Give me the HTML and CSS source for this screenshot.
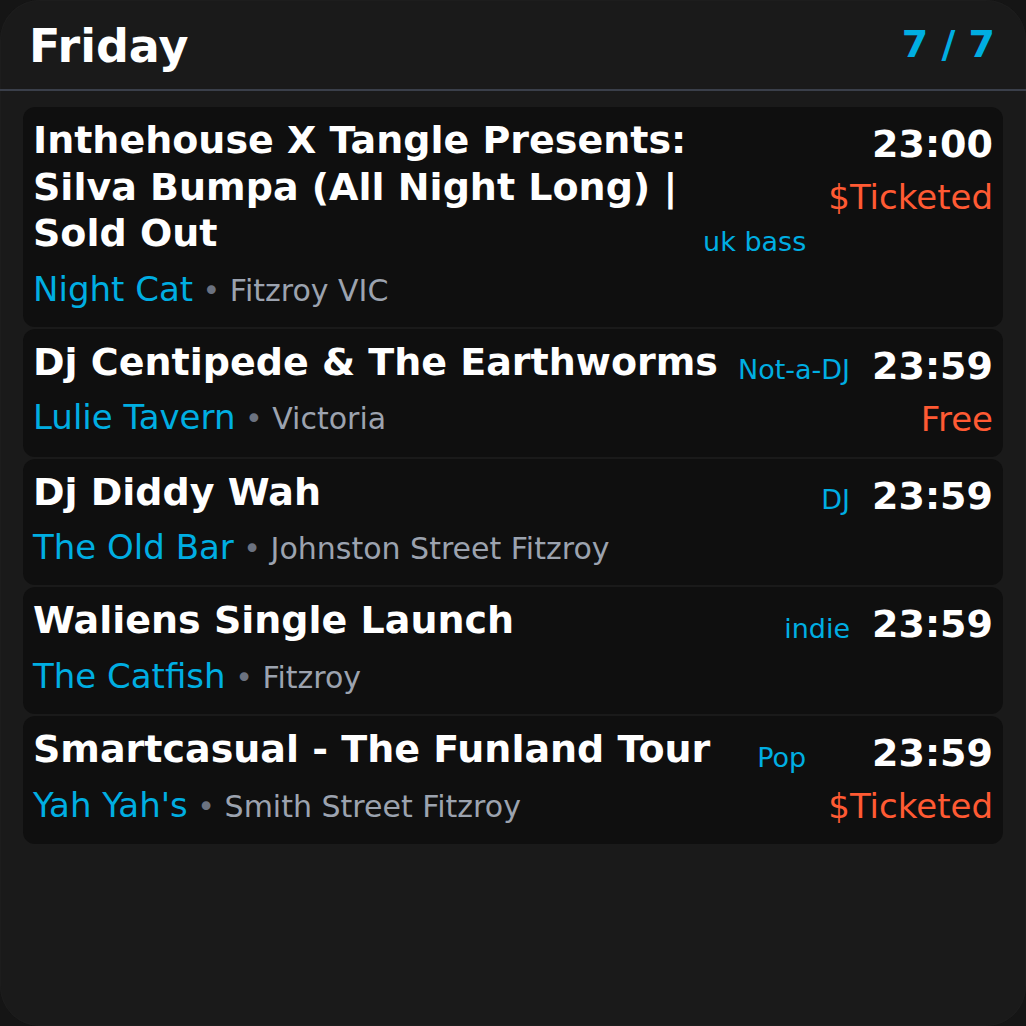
FILE: index.html
```html
<!DOCTYPE html>
<html lang="en">
<head>
<meta charset="utf-8">
<title>Friday</title>
<link rel="stylesheet" href="styles.css">
</head>
<body>
<div class="app">
  <header class="hdr">
    <h1 class="day">Friday</h1>
    <div class="count">7 / 7</div>
  </header>
  <div class="list">
    <div class="card">
      <div class="main">
        <div class="top">
          <div class="title">Inthehouse X Tangle Presents: Silva Bumpa (All Night Long) | Sold Out</div>
          <div class="genre">uk bass</div>
        </div>
        <div class="venue"><span class="vname">Night Cat</span><span class="dot"> • </span><span class="loc">Fitzroy VIC</span></div>
      </div>
      <div class="side">
        <div class="time">23:00</div>
        <div class="price">$Ticketed</div>
      </div>
    </div>
    <div class="card">
      <div class="main">
        <div class="top">
          <div class="title">Dj Centipede &amp; The Earthworms</div>
          <div class="genre">Not-a-DJ</div>
        </div>
        <div class="venue"><span class="vname">Lulie Tavern</span><span class="dot"> • </span><span class="loc">Victoria</span></div>
      </div>
      <div class="side">
        <div class="time">23:59</div>
        <div class="price">Free</div>
      </div>
    </div>
    <div class="card">
      <div class="main">
        <div class="top">
          <div class="title">Dj Diddy Wah</div>
          <div class="genre">DJ</div>
        </div>
        <div class="venue"><span class="vname">The Old Bar</span><span class="dot"> • </span><span class="loc">Johnston Street Fitzroy</span></div>
      </div>
      <div class="side">
        <div class="time">23:59</div>
      </div>
    </div>
    <div class="card">
      <div class="main">
        <div class="top">
          <div class="title">Waliens Single Launch</div>
          <div class="genre">indie</div>
        </div>
        <div class="venue"><span class="vname">The Catfish</span><span class="dot"> • </span><span class="loc">Fitzroy</span></div>
      </div>
      <div class="side">
        <div class="time">23:59</div>
      </div>
    </div>
    <div class="card">
      <div class="main">
        <div class="top">
          <div class="title">Smartcasual - The Funland Tour</div>
          <div class="genre">Pop</div>
        </div>
        <div class="venue"><span class="vname">Yah Yah's</span><span class="dot"> • </span><span class="loc">Smith Street Fitzroy</span></div>
      </div>
      <div class="side">
        <div class="time">23:59</div>
        <div class="price">$Ticketed</div>
      </div>
    </div>
  </div>
</div>
</body>
</html>
```

FILE: styles.css
```css
html, body {
  margin: 0;
  padding: 0;
  background: #151515;
}
body {
  font-family: "DejaVu Sans", "Liberation Sans", sans-serif;
  color: #ffffff;
}
.app {
  box-sizing: border-box;
  width: 1026px;
  height: 1026px;
  background: #1a1a1a;
  border-radius: 40px;
  box-shadow: inset 0 0 0 1px #1d1d1d;
  overflow: hidden;
}
.hdr {
  display: flex;
  align-items: center;
  justify-content: space-between;
  padding: 19px 31px 16px 29px;
  border-bottom: 2px solid #3a3f4a;
}
.day {
  margin: 0;
  font-size: 46px;
  font-weight: bold;
  line-height: 54px;
  color: #ffffff;
}
.count {
  font-size: 38px;
  font-weight: bold;
  color: #00aee2;
  line-height: 44px;
  padding-bottom: 4px;
}
.list {
  display: flex;
  flex-direction: column;
  gap: 2px;
  padding: 16px 23px 0;
}
.card {
  display: flex;
  align-items: flex-start;
  gap: 22px;
  background: #0f0f0f;
  border-radius: 12px;
  padding: 10px 10px 16px;
}
.main {
  flex: 1;
  min-width: 0;
}
.top {
  display: flex;
  align-items: flex-end;
  gap: 6px;
}
.title {
  flex: 1;
  font-size: 38px;
  font-weight: bold;
  line-height: 46.6px;
  color: #ffffff;
}
.genre {
  font-size: 27px;
  color: #00aee2;
  white-space: nowrap;
}
.venue {
  margin-top: 11px;
  font-size: 34px;
  line-height: 43px;
  white-space: nowrap;
}
.venue span {
  line-height: 1;
}
.vname {
  font-size: 34px;
  color: #00aee2;
}
.dot {
  font-size: 30px;
  color: #6b7280;
}
.loc {
  font-size: 30px;
  color: #9ca3af;
}
.side {
  text-align: right;
  padding-top: 4px;
  white-space: nowrap;
}
.time {
  font-size: 38px;
  font-weight: bold;
  line-height: 46px;
  color: #ffffff;
}
.price {
  margin-top: 9px;
  font-size: 34px;
  line-height: 43px;
  color: #ff5a33;
}
```
